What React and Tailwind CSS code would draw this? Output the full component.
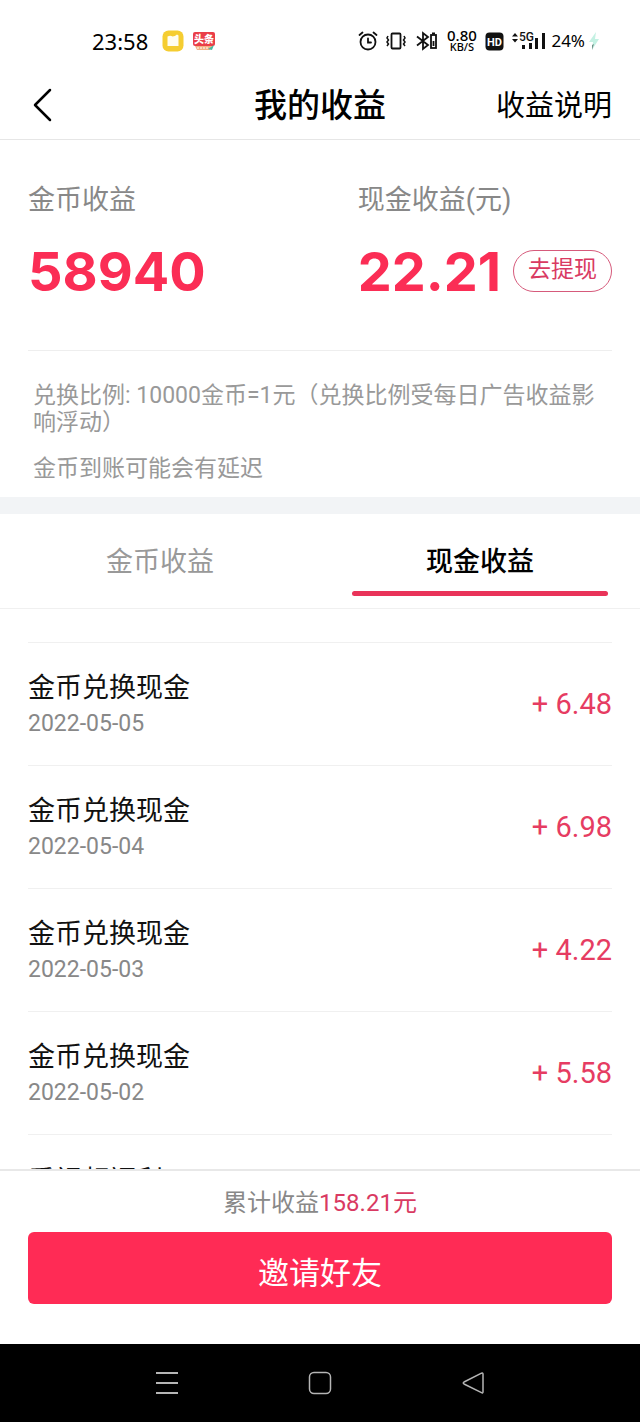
import { useState } from "react";

const records = [
  { title: "金币兑换现金", date: "2022-05-05", amount: "+ 6.48" },
  { title: "金币兑换现金", date: "2022-05-04", amount: "+ 6.98" },
  { title: "金币兑换现金", date: "2022-05-03", amount: "+ 4.22" },
  { title: "金币兑换现金", date: "2022-05-02", amount: "+ 5.58" },
];

function StatusBar() {
  return (
    <div className="flex h-[70px] items-center justify-between pt-3 pr-[40px] pl-[92px] text-black">
      <div className="flex items-center">
        <span className="w-[70px] font-['Noto_Sans','Noto_Sans_CJK_SC',sans-serif] text-[22px] leading-6">23:58</span>
        <svg width="22" height="22" viewBox="0 0 22 22" aria-hidden="true">
          <rect x="0.5" y="0.5" width="21" height="21" rx="6" fill="#f5cd31" />
          <path d="M5.5 6.500Q8.500 5 10.500 6.500Q13 6.500 15 4.500L16.500 5.500V16H5.500Z" fill="#fffdf0" />
        </svg>
        <svg className="ml-[9px]" width="22" height="20" viewBox="0 0 22 20" aria-hidden="true">
          <rect x="0" y="1" width="22" height="14" rx="2" fill="#ea3e48" />
          <text x="11" y="12" fontSize="10" fontWeight="900" textAnchor="middle" fill="#fff" fontFamily="Noto Sans CJK SC, sans-serif">头条</text>
          <path d="M2 15H20L17 19H4Z" fill="#f3b184" />
          <path d="M4 17H15" stroke="#fff" strokeDasharray="2 1" />
          <path d="M15 18L21 14L19 19Z" fill="#48b9a5" />
        </svg>
      </div>
      <div className="flex items-center">
        <svg width="20" height="22" viewBox="0 0 20 22" fill="none" stroke="#111" strokeWidth="1.8" strokeLinecap="round" aria-hidden="true">
          <circle cx="10" cy="12" r="7.500" />
          <path d="M10 8.500V12.500H13M1.500 5L4.500 2.500M18.500 5L15.500 2.500" />
        </svg>
        <svg className="ml-[8px]" width="20" height="20" viewBox="0 0 20 20" fill="none" stroke="#111" strokeWidth="1.8" aria-hidden="true">
          <rect x="5.500" y="2.500" width="9" height="15" rx="1" />
          <path d="M2 5L1 7L2.500 9L1 11L2.500 13L1 15M18 5L19 7L17.500 9L19 11L17.500 13L19 15" strokeWidth="1.500" />
        </svg>
        <svg className="ml-[10px]" width="22" height="20" viewBox="0 0 22 20" fill="none" stroke="#111" strokeWidth="1.800" aria-hidden="true">
          <path d="M1 5.500L12 14L7 18V2L12 6L1 14.500" />
          <rect x="15" y="4" width="5" height="13" />
          <path d="M16 2.500H19M17.500 10V15" />
        </svg>
        <div className="ml-[8px] flex w-[31px] flex-col items-center font-['Noto_Sans',sans-serif] font-medium">
          <span className="text-[15px] leading-[12px]">0.80</span>
          <span className="text-[11px] leading-[12px]">KB/S</span>
        </div>
        <svg className="ml-[8px]" width="19" height="19" viewBox="0 0 19 19" aria-hidden="true">
          <rect x="0.500" y="0.500" width="18" height="18" rx="4" fill="#111" />
          <text x="9.500" y="13.500" fontSize="11" fontWeight="700" textAnchor="middle" fill="#fff" fontFamily="Roboto, sans-serif">HD</text>
        </svg>
        <svg className="ml-[8px]" width="34" height="20" viewBox="0 0 34 20" fill="#111" aria-hidden="true">
          <path d="M0 5.500L3 2L6 5.500ZM0 8L3 11.500L6 8Z" />
          <text x="7" y="10" fontSize="12" fontWeight="500" fontFamily="Roboto, sans-serif">5G</text>
          <path d="M10 14H13V18H10ZM17 12H20V18H17ZM23 7H26V18H23ZM30 2H33V18H30Z" />
        </svg>
        <span className="ml-[5px] font-['Noto_Sans',sans-serif] text-[17px] leading-5">24%</span>
        <svg className="ml-[3px]" width="12" height="20" viewBox="0 0 12 20" aria-hidden="true">
          <path d="M8 1L1 11H5L4 19L11 8H7Z" fill="#c4f1e3" />
          <path d="M4 14L6 13L4 19Z" fill="#6f9088" />
        </svg>
      </div>
    </div>
  );
}

function Tab({ label, active, onClick }) {
  return (
    <button
      type="button"
      role="tab"
      aria-selected={active}
      onClick={onClick}
      className={`flex flex-1 flex-col items-center justify-between pt-[30px] text-[27px] leading-9 ${active ? "font-medium text-black" : "text-[#999]"}`}
    >
      {label}
      <span className={`mb-3 h-[5px] w-4/5 rounded-full ${active ? "bg-[#e93359]" : "bg-transparent"}`} />
    </button>
  );
}

export default function App() {
  const [tab, setTab] = useState("cash");
  return (
    <div className="flex min-h-screen flex-col bg-white font-['Roboto','Noto_Sans_CJK_SC',sans-serif]">
      <StatusBar />
      <header className="grid h-[70px] grid-cols-[1fr_auto_1fr] items-center border-b border-[#e6e6e6] px-7 text-black">
        <button type="button" aria-label="返回" className="w-8 pl-[5px]">
          <svg width="20" height="34" viewBox="0 0 20 34" fill="none" stroke="#000" strokeWidth="2.500" strokeLinecap="round" strokeLinejoin="round" aria-hidden="true">
            <path d="M17 2L2 17L17 32" />
          </svg>
        </button>
        <h1 className="pt-0.5 text-[33px] leading-10 font-medium">我的收益</h1>
        <a href="#about" className="justify-self-end pt-0.5 text-[29px] leading-10">收益说明</a>
      </header>

      <section className="mx-7 flex h-[211px] border-b border-[#eee] pt-[42px]">
        <div className="flex flex-1 flex-col gap-[22px]">
          <h2 className="text-[27px] leading-9 text-[#888]">金币收益</h2>
          <p className="font-['Inter',sans-serif] text-[54px] leading-[64px] font-bold text-[#fb2d55]">58940</p>
        </div>
        <div className="flex flex-col gap-[22px]">
          <h2 className="text-[27px] leading-9 text-[#888]">现金收益(元)</h2>
          <div className="flex items-center gap-3">
            <p className="font-['Inter',sans-serif] text-[54px] leading-[64px] font-bold text-[#fb2d55]">22.21</p>
            <button type="button" className="mb-0.5 h-[42px] rounded-full border border-[#d65a7b] px-[14px] pb-0.5 text-[23px] leading-7 text-[#d93a62]">去提现</button>
          </div>
        </div>
      </section>

      <section className="flex flex-col gap-[19px] pt-[31px] pr-6 pb-[15px] pl-[33px] text-[23px] leading-[27px] text-[#999]">
        <p>兑换比例: 10000金币=1元（兑换比例受每日广告收益影响浮动）</p>
        <p>金币到账可能会有延迟</p>
      </section>
      <div className="h-[17px] bg-[#f2f4f6]" />

      <div role="tablist" className="flex h-[95px] border-b border-[#f0f0f0]">
        <Tab label="金币收益" active={tab === "coin"} onClick={() => setTab("coin")} />
        <Tab label="现金收益" active={tab === "cash"} onClick={() => setTab("cash")} />
      </div>

      <main className="h-0 grow overflow-hidden px-7 pt-[33px]">
        <ul className="border-t border-[#f0f0f0]">
          {records.map((r) => (
            <li key={r.date} className="flex h-[123px] items-center justify-between border-b border-[#f0f0f0]">
              <div>
                <p className="text-[27px] leading-10 text-[#111]">{r.title}</p>
                <p className="text-[23px] leading-8 text-[#888]">{r.date}</p>
              </div>
              <p className="text-[29px] leading-9 text-[#e63c62]">{r.amount}</p>
            </li>
          ))}
          <li className="pt-[26px]">
            <p className="text-[27px] leading-10 text-[#111]">看视频福利</p>
          </li>
        </ul>
      </main>

      <footer className="flex h-[175px] shrink-0 flex-col border-t-2 border-[#e8e8e8] px-7 pt-[14px]">
        <p className="text-center text-[24px] leading-9 text-[#888]">
          累计收益<span className="text-[#d93a62]">158.21元</span>
        </p>
        <button type="button" className="mt-[11px] h-[72px] rounded-md bg-[#ff2b55] pt-3 text-[31px] leading-10 text-white">邀请好友</button>
      </footer>

      <nav className="flex h-[78px] shrink-0 items-center justify-center gap-[129px] bg-black text-[#b5b5b5]">
        <button type="button" aria-label="菜单">
          <svg width="24" height="24" viewBox="0 0 24 24" fill="none" stroke="currentColor" strokeWidth="1.800" aria-hidden="true">
            <path d="M1 2H23M1 12H23M1 22H23" />
          </svg>
        </button>
        <button type="button" aria-label="主页">
          <svg width="24" height="24" viewBox="0 0 24 24" fill="none" stroke="currentColor" strokeWidth="1.500" aria-hidden="true">
            <rect x="1.500" y="1.500" width="21" height="21" rx="4.500" />
          </svg>
        </button>
        <button type="button" aria-label="后退">
          <svg width="24" height="24" viewBox="0 0 24 24" fill="none" stroke="currentColor" strokeWidth="1.500" strokeLinejoin="round" aria-hidden="true">
            <path d="M20.500 2.200Q22 1.500 22 3.200V20.800Q22 22.500 20.500 21.700L3 13Q1.500 12 3 11Z" />
          </svg>
        </button>
      </nav>
    </div>
  );
}
